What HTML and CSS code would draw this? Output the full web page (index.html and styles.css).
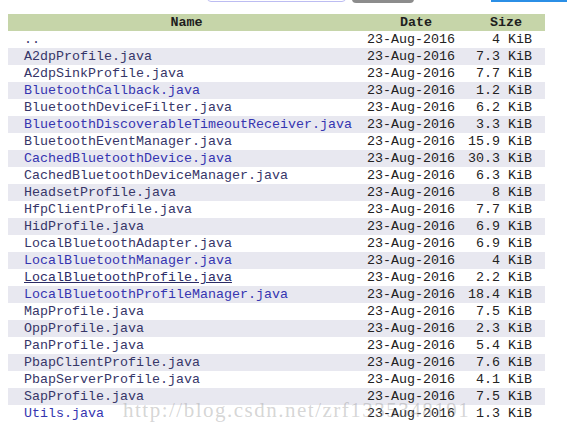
FILE: index.html
```html
<!DOCTYPE html>
<html>
<head>
<meta charset="utf-8">
<link rel="stylesheet" href="styles.css">
</head>
<body>
<div class="topbar">
  <span class="label">jump typing</span>
  <span class="search"></span>
  <span class="btn"></span>
  <span class="spacer"></span>
  <span class="blue"></span>
</div>
<table class="listing">
  <colgroup><col class="c-name"><col class="c-date"><col class="c-size"></colgroup>
  <thead>
    <tr><th class="h-name">Name</th><th class="h-date">Date</th><th class="h-size">Size</th></tr>
  </thead>
  <tbody>
    <tr><td class="name"><a class="v">..</a></td><td class="date">23-Aug-2016</td><td class="size">4 KiB</td></tr>
    <tr><td class="name"><a class="v">A2dpProfile.java</a></td><td class="date">23-Aug-2016</td><td class="size">7.3 KiB</td></tr>
    <tr><td class="name"><a class="v">A2dpSinkProfile.java</a></td><td class="date">23-Aug-2016</td><td class="size">7.7 KiB</td></tr>
    <tr><td class="name"><a class="u">BluetoothCallback.java</a></td><td class="date">23-Aug-2016</td><td class="size">1.2 KiB</td></tr>
    <tr><td class="name"><a class="v">BluetoothDeviceFilter.java</a></td><td class="date">23-Aug-2016</td><td class="size">6.2 KiB</td></tr>
    <tr><td class="name"><a class="u">BluetoothDiscoverableTimeoutReceiver.java</a></td><td class="date">23-Aug-2016</td><td class="size">3.3 KiB</td></tr>
    <tr><td class="name"><a class="v">BluetoothEventManager.java</a></td><td class="date">23-Aug-2016</td><td class="size">15.9 KiB</td></tr>
    <tr><td class="name"><a class="u">CachedBluetoothDevice.java</a></td><td class="date">23-Aug-2016</td><td class="size">30.3 KiB</td></tr>
    <tr><td class="name"><a class="v">CachedBluetoothDeviceManager.java</a></td><td class="date">23-Aug-2016</td><td class="size">6.3 KiB</td></tr>
    <tr><td class="name"><a class="v">HeadsetProfile.java</a></td><td class="date">23-Aug-2016</td><td class="size">8 KiB</td></tr>
    <tr><td class="name"><a class="v">HfpClientProfile.java</a></td><td class="date">23-Aug-2016</td><td class="size">7.7 KiB</td></tr>
    <tr><td class="name"><a class="v">HidProfile.java</a></td><td class="date">23-Aug-2016</td><td class="size">6.9 KiB</td></tr>
    <tr><td class="name"><a class="v">LocalBluetoothAdapter.java</a></td><td class="date">23-Aug-2016</td><td class="size">6.9 KiB</td></tr>
    <tr><td class="name"><a class="u">LocalBluetoothManager.java</a></td><td class="date">23-Aug-2016</td><td class="size">4 KiB</td></tr>
    <tr><td class="name"><a class="v hover">LocalBluetoothProfile.java</a></td><td class="date">23-Aug-2016</td><td class="size">2.2 KiB</td></tr>
    <tr><td class="name"><a class="u">LocalBluetoothProfileManager.java</a></td><td class="date">23-Aug-2016</td><td class="size">18.4 KiB</td></tr>
    <tr><td class="name"><a class="v">MapProfile.java</a></td><td class="date">23-Aug-2016</td><td class="size">7.5 KiB</td></tr>
    <tr><td class="name"><a class="v">OppProfile.java</a></td><td class="date">23-Aug-2016</td><td class="size">2.3 KiB</td></tr>
    <tr><td class="name"><a class="v">PanProfile.java</a></td><td class="date">23-Aug-2016</td><td class="size">5.4 KiB</td></tr>
    <tr><td class="name"><a class="v">PbapClientProfile.java</a></td><td class="date">23-Aug-2016</td><td class="size">7.6 KiB</td></tr>
    <tr><td class="name"><a class="v">PbapServerProfile.java</a></td><td class="date">23-Aug-2016</td><td class="size">4.1 KiB</td></tr>
    <tr><td class="name"><a class="v">SapProfile.java</a></td><td class="date">23-Aug-2016</td><td class="size">7.5 KiB</td></tr>
    <tr><td class="name"><a class="u">Utils.java</a></td><td class="date">23-Aug-2016</td><td class="size">1.3 KiB</td></tr>
  </tbody>
</table>
<div class="watermark">http://blog.csdn.net/zrf1335348191</div>
</body>
</html>
```

FILE: styles.css
```css
html, body {
  margin: 0;
  padding: 0;
  background: #ffffff;
}
body {
  position: relative;
  width: 567px;
  height: 431px;
  overflow: hidden;
  font-family: "Liberation Mono", "DejaVu Sans Mono", monospace;
  font-size: 13.33px;
  color: #222222;
}
.topbar {
  height: 3px;
  display: flex;
  align-items: flex-end;
  overflow: hidden;
}
.label {
  margin-left: 20px;
  width: 166px;
  font-family: "Liberation Sans", Arial, sans-serif;
  font-size: 13px;
  line-height: 13px;
  height: 13px;
  margin-bottom: 1px;
  color: #333333;
  white-space: nowrap;
  overflow: hidden;
  visibility: hidden;
}
.search {
  margin-left: 21px;
  width: 137px;
  height: 20px;
  border: 1px solid #bcbcf2;
  border-radius: 4px;
  margin-bottom: 1px;
  flex: none;
}
.btn {
  margin-left: 6px;
  width: 62px;
  height: 20px;
  background: #8c8c8c;
  border-radius: 4px;
  flex: none;
}
.spacer {
  width: 77px;
  flex: none;
}
.blue {
  flex: 1;
  height: 20px;
  border-bottom: 2px solid #2b8fe6;
  margin-bottom: 1px;
}
.listing {
  margin: 11px 0 0 8px;
  width: 537px;
  border-collapse: collapse;
  table-layout: fixed;
}
.c-name { width: 357px; }
.c-date { width: 102px; }
.c-size { width: 78px; }
.listing th,
.listing td {
  height: 17px;
  line-height: 17px;
  padding: 0;
  white-space: nowrap;
  overflow: visible;
}
.listing thead tr {
  background: #c6d5a9;
}
.listing th {
  font-weight: bold;
  text-align: center;
  color: #1e1e1e;
}
.h-name { padding-left: 16px; }
.h-date { padding-left: 2px; }
.h-size { padding-right: 0; }
.listing tbody tr:nth-child(even) {
  background: #e8e8f0;
}
.name {
  padding-left: 16px !important;
}
.date {
  padding-left: 2px !important;
  color: #222222;
}
.size {
  text-align: right;
  padding-right: 13px !important;
  color: #222222;
}
.name a {
  text-decoration: none;
}
.name a.v { color: #363668; }
.name a.u { color: #3535b0; }
.name a.hover {
  text-decoration: underline;
  color: #2c2c66;
}
.watermark {
  position: absolute;
  left: 123px;
  top: 399px;
  font-family: "Liberation Serif", "Times New Roman", serif;
  font-size: 21px;
  line-height: 22px;
  color: rgba(150, 150, 150, 0.4);
  white-space: nowrap;
  letter-spacing: 1.5px;
  pointer-events: none;
}
```
